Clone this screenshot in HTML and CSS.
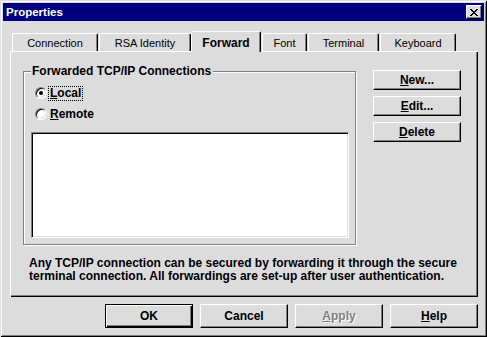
FILE: index.html
```html
<!DOCTYPE html>
<html>
<head>
<meta charset="utf-8">
<title>Properties</title>
<link rel="stylesheet" href="styles.css">
</head>
<body>
<div class="window">
  <div class="titlebar">
    <span class="title">Properties</span>
    <button class="close" aria-label="Close">
      <svg width="8" height="7" viewBox="0 0 8 7"><path d="M0 0h2v1h1v1h2V1h1V0h2v1H7v1H6v1H5v1h1v1h1v1h1v1H6V6H5V5H3v1H2v1H0V6h1V5h1V4h1V3H2V2H1V1H0z" fill="#000"/></svg>
    </button>
  </div>
  <div class="content">
    <div class="tabs">
      <div class="tab tab-conn">Connection</div>
      <div class="tab tab-rsa">RSA Identity</div>
      <div class="tab tab-fwd active">Forward</div>
      <div class="tab tab-font">Font</div>
      <div class="tab tab-term">Terminal</div>
      <div class="tab tab-kbd">Keyboard</div>
    </div>
    <div class="panel">
      <div class="panel-top">
        <fieldset class="group">
          <legend>Forwarded TCP/IP Connections</legend>
          <label class="radio first"><span class="circle checked"></span><span class="label focus"><u>L</u>ocal</span></label>
          <label class="radio"><span class="circle"></span><span class="label"><u>R</u>emote</span></label>
          <div class="listbox"></div>
        </fieldset>
        <div class="side">
          <button class="btn side-btn"><u>N</u>ew...</button>
          <button class="btn side-btn"><u>E</u>dit...</button>
          <button class="btn side-btn"><u>D</u>elete</button>
        </div>
      </div>
      <p class="desc">Any TCP/IP connection can be secured by forwarding it through the secure<br>terminal connection. All forwardings are set-up after user authentication.</p>
    </div>
    <div class="actions">
      <button class="btn action default">OK</button>
      <button class="btn action">Cancel</button>
      <button class="btn action disabled"><u>A</u>pply</button>
      <button class="btn action"><u>H</u>elp</button>
    </div>
  </div>
</div>
</body>
</html>
```
FILE: styles.css
```css
* { box-sizing: border-box; }
html, body { margin: 0; padding: 0; }
body {
  width: 487px;
  height: 337px;
  overflow: hidden;
  background: #dcdcdc;
  font-family: "Liberation Sans", Arial, sans-serif;
  font-size: 11px;
  color: #000;
}
.window {
  width: 487px;
  height: 337px;
  padding: 3px;
  background: #dcdcdc;
  box-shadow: inset 1px 1px #dfdfdf, inset -1px -1px #000, inset 2px 2px #fff, inset -2px -2px #808080;
  display: flex;
  flex-direction: column;
}
.titlebar {
  height: 18px;
  background: #000080;
  display: flex;
  align-items: center;
  justify-content: space-between;
  padding: 0 2px 0 3px;
}
.title {
  color: #fff;
  font-weight: bold;
  font-size: 11.5px;
  line-height: 13px;
}
.close {
  width: 16px;
  height: 14px;
  margin: 0;
  padding: 0;
  border: 1px solid;
  border-color: #fff #000 #000 #fff;
  box-shadow: inset -1px -1px #808080, inset 1px 1px #dfdfdf;
  background: #dcdcdc;
  display: flex;
  align-items: center;
  justify-content: center;
}
.close svg { display: block; margin-left: -1px; }
.content {
  flex: 1;
  padding: 10px 6px 0 7px;
  display: flex;
  flex-direction: column;
}
.tabs {
  height: 20px;
  display: flex;
  align-items: flex-end;
  padding-left: 2px;
}
.tab {
  height: 18px;
  border-top: 1px solid #fff;
  border-left: 1px solid #fff;
  border-right: 1px solid #000;
  border-radius: 2px 2px 0 0;
  box-shadow: inset -1px 0 #808080;
  text-align: center;
  line-height: 17px;
  padding-top: 1px;
  background: #dcdcdc;
}
.tab.active {
  height: 21px;
  margin-bottom: -1px;
  position: relative;
  z-index: 1;
  font-weight: bold;
  font-size: 12px;
  line-height: 18px;
  padding-top: 2px;
}
.tab-conn { width: 86px; margin-right: 1px; }
.tab-rsa { width: 92px; }
.tab-fwd { width: 70px; margin-right: 1px; }
.tab-font { width: 45px; margin-right: 1px; }
.tab-term { width: 71px; margin-right: 1px; }
.tab-kbd { width: 76px; }
.panel {
  height: 246px;
  padding: 14px 0 0 13px;
  box-shadow: inset 1px 1px #fff, inset -1px -1px #000, inset -2px -2px #808080;
  font-weight: bold;
  font-size: 12px;
}
.panel-top {
  display: flex;
  align-items: flex-start;
}
.group {
  width: 333px;
  height: 180px;
  margin: 0;
  padding: 0 7px;
  border: 1px solid #808080;
  box-shadow: inset 1px 1px #fff, 1px 1px #fff;
  display: flex;
  flex-direction: column;
  min-width: 0;
}
.group legend {
  padding: 0 2px 0 1px;
  line-height: 13px;
  background: #dcdcdc;
  position: relative;
  z-index: 1;
}
.radio {
  display: flex;
  align-items: center;
  height: 16px;
  margin-left: 4px;
  margin-top: 5px;
}
.radio.first { margin-top: 7px; }
.circle {
  width: 12px;
  height: 12px;
  border-radius: 50%;
  border: 1px solid;
  border-color: #808080 #fff #fff #808080;
  box-shadow: inset 1px 1px #000, inset -1px -1px #dfdfdf;
  background: #fff;
  display: flex;
  align-items: center;
  justify-content: center;
  flex: none;
}
.circle.checked::after {
  content: "";
  width: 4px;
  height: 4px;
  border-radius: 50%;
  background: #000;
}
.label {
  margin-left: 2px;
  padding: 0 1px;
  line-height: 13px;
}
.label.focus { outline: 1px dotted #000; outline-offset: 0; }
.listbox {
  margin-top: 10px;
  width: 318px;
  height: 106px;
  background: #fff;
  border: 1px solid;
  border-color: #808080 #fff #fff #808080;
  box-shadow: inset 1px 1px #000, inset -1px -1px #dfdfdf;
}
.side {
  margin-left: 17px;
  margin-top: 5px;
  display: flex;
  flex-direction: column;
  gap: 6px;
}
.btn {
  margin: 0;
  padding: 0;
  font-family: inherit;
  font-size: 12px;
  font-weight: bold;
  color: #000;
  background: #dcdcdc;
  border: 1px solid;
  border-color: #fff #000 #000 #fff;
  box-shadow: inset -1px -1px #808080, inset 1px 1px #dfdfdf;
  line-height: 13px;
}
.btn u { text-underline-offset: 1px; }
.side-btn { width: 88px; height: 20px; }
.desc {
  margin: 12px 0 0 6px;
  line-height: 13px;
}
.actions {
  display: flex;
  justify-content: flex-end;
  gap: 7px;
  margin-top: 7px;
}
.action { width: 88px; height: 24px; }
.action.default {
  border: 1px solid #000;
  box-shadow: inset 1px 1px #fff, inset -1px -1px #000, inset -2px -2px #808080;
}
.action.disabled {
  color: #808080;
  text-shadow: 1px 1px #fff;
}
u { text-decoration-thickness: 1px; }
```
